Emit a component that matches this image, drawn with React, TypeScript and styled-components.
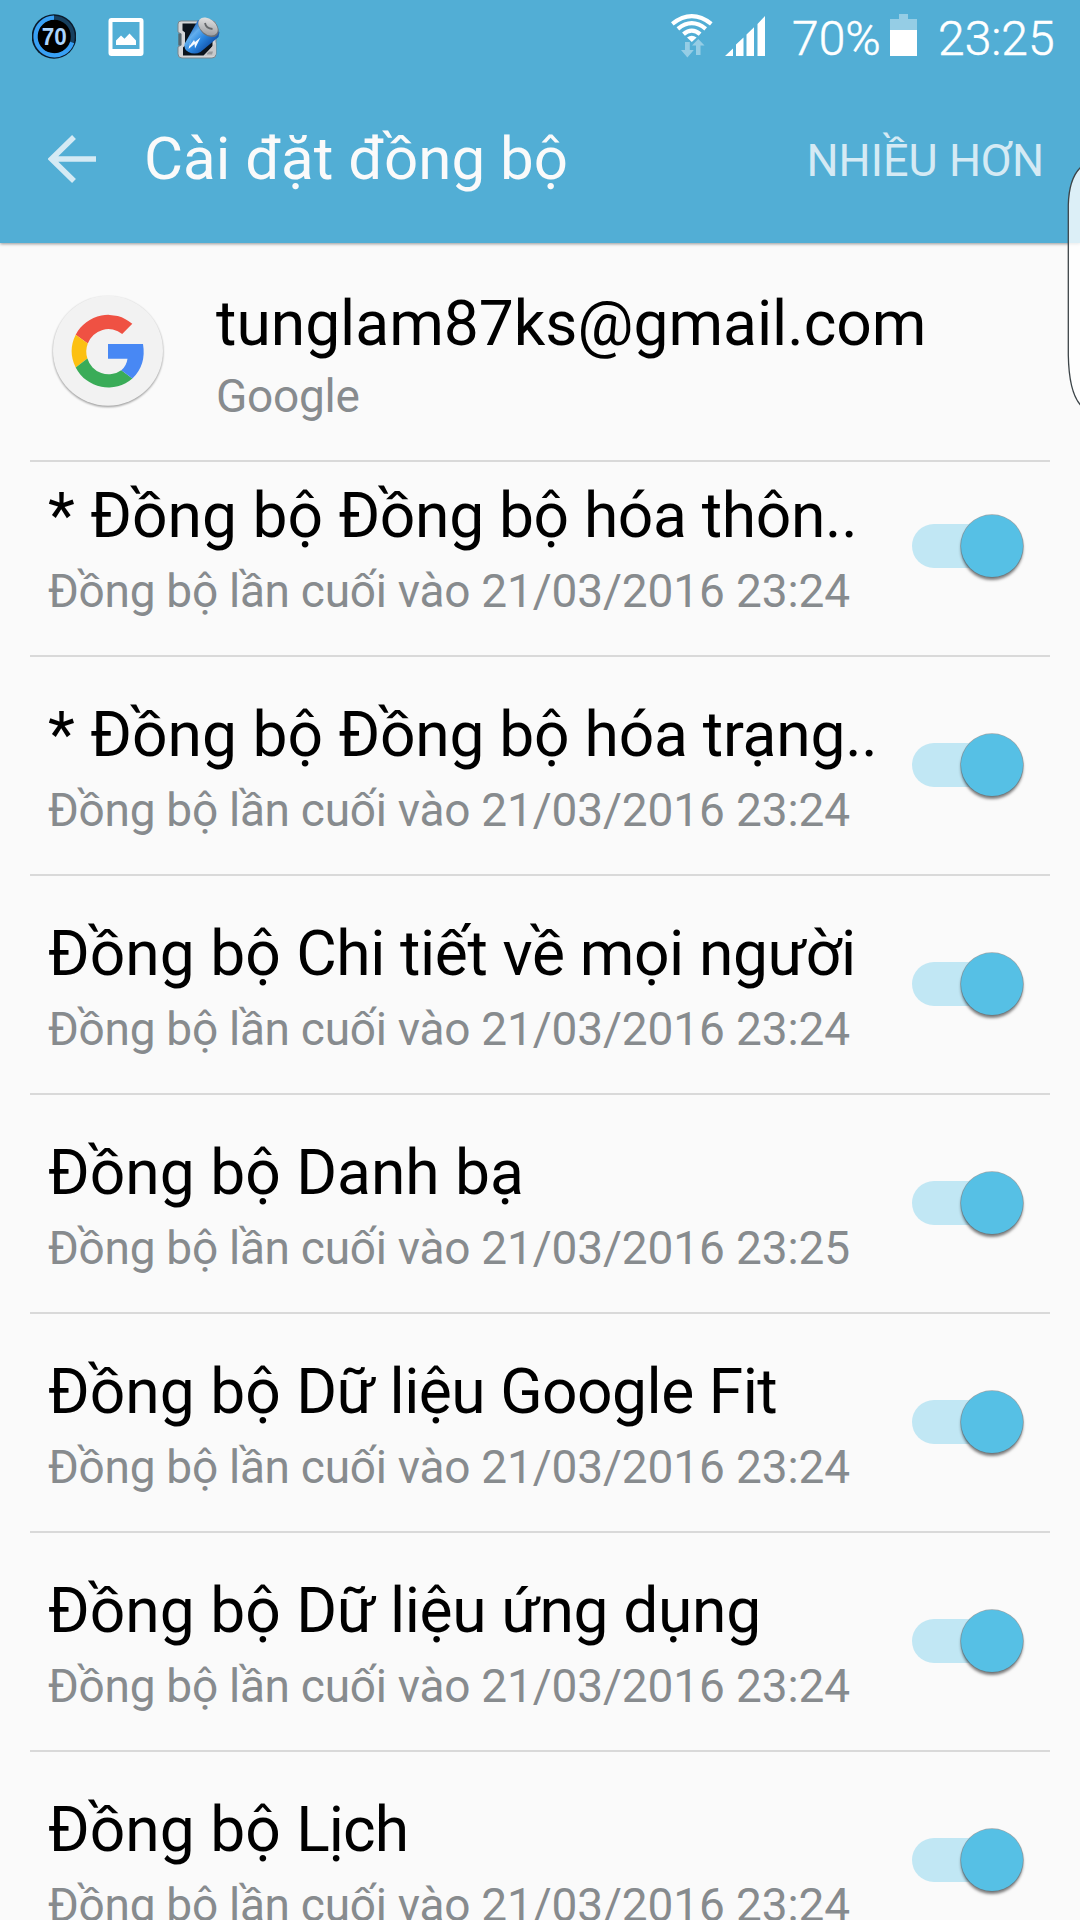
import React from "react";
import styled, { createGlobalStyle } from "styled-components";

const Global = createGlobalStyle`
  html, body { margin: 0; padding: 0; background: #fafafa; }
  * { box-sizing: border-box; }
`;

const Screen = styled.div`
  position: relative;
  width: 1080px;
  height: 1920px;
  overflow: hidden;
  display: flex;
  flex-direction: column;
  background: #fafafa;
  font-family: Roboto, "Noto Sans", sans-serif;
  white-space: nowrap;
`;

const TopArea = styled.header`
  flex: none;
  height: 243px;
  background: #52aed5;
  box-shadow: 0 1px 3px rgba(0, 0, 0, 0.4);
  z-index: 1;
`;

const StatusBar = styled.div`
  height: 75px;
  padding: 0 26px 0 32px;
  display: flex;
  justify-content: space-between;
`;

const StatusGroup = styled.div`
  display: flex;
  align-items: flex-start;
`;

const StatusIcon = styled.svg<{ $gap?: number }>`
  display: block;
  flex: none;
  margin-left: ${(p) => p.$gap ?? 0}px;
`;

const StatusText = styled.span<{ $width: number; $gap: number }>`
  width: ${(p) => p.$width}px;
  margin-left: ${(p) => p.$gap}px;
  padding-top: 11px;
  font-size: 48px;
  line-height: 56px;
  font-weight: 300;
  -webkit-text-stroke: 0.5px #fff;
  color: #fff;
`;

const ActionBar = styled.div`
  height: 168px;
  display: flex;
  align-items: center;
  padding: 0 36px 0 48px;
`;

const Title = styled.h1`
  flex: 1;
  margin: 0 0 0 48px;
  font-size: 60px;
  line-height: 70px;
  font-weight: 400;
  color: #fafafa;
`;

const MoreButton = styled.button`
  margin: 4px 0 0;
  padding: 0;
  border: 0;
  background: none;
  font: 400 45px/54px Roboto, "Noto Sans", sans-serif;
  color: #d5eaf4;
`;

const Account = styled.section`
  flex: none;
  height: 219px;
  margin: 0 30px;
  padding-left: 20px;
  display: flex;
  border-bottom: 2px solid #d9d9d9;
`;

const AccountIcon = styled.svg`
  display: block;
  flex: none;
  margin-top: 47px;
`;

const AccountText = styled.div`
  margin: 44px 0 0 50px;
`;

const Label = styled.div`
  font-size: 62.3px;
  line-height: 74px;
  color: #000;
`;

const Name = styled.span<{ $tracking: number }>`
  letter-spacing: ${(p) => p.$tracking}px;
`;

const Caption = styled.div<{ $gap: number }>`
  margin-top: ${(p) => p.$gap}px;
  font-size: 46px;
  line-height: 54px;
  letter-spacing: -0.28px;
  color: #878b8e;
`;

const Timestamp = styled.time`
  letter-spacing: -0.13px;
`;

const ListViewport = styled.main`
  flex: 1;
  min-height: 0;
  overflow: hidden;
  padding: 0 30px;
`;

const List = styled.div`
  margin-top: -24px;
`;

const Row = styled.div`
  height: 219px;
  padding: 41px 26px 0 18px;
  display: flex;
  justify-content: space-between;
  border-bottom: 2px solid #d9d9d9;
`;

const Toggle = styled.button`
  flex: none;
  width: 112px;
  height: 62px;
  margin-top: 36px;
  padding: 0;
  border: 0;
  background: none;
  display: flex;
  align-items: center;
`;

const Track = styled.span`
  flex: none;
  width: 104px;
  height: 44px;
  border-radius: 22px;
  background: #c1e7f4;
`;

const Thumb = styled.span`
  flex: none;
  width: 62px;
  height: 62px;
  margin-left: -55.5px;
  border-radius: 50%;
  background: #56c0e5;
  box-shadow: 0 0 0 0.7px rgba(90, 110, 118, 0.6), 0 3px 3px rgba(0, 0, 0, 0.5);
`;

const EdgeHandle = styled.svg`
  position: absolute;
  top: 160px;
  right: 0;
  z-index: 2;
`;

const BadgeText = styled.text`
  font: 700 24px "Liberation Sans", sans-serif;
  fill: #a9d4ff;
`;

const items = [
  { prefix: "* Đồng bộ ", name: "Đồng bộ hóa thôn..", time: "23:24", tracking: -0.33 },
  { prefix: "* Đồng bộ ", name: "Đồng bộ hóa trạng..", time: "23:24", tracking: -0.24 },
  { prefix: "Đồng bộ ", name: "Chi tiết về mọi người", time: "23:24", tracking: -0.38 },
  { prefix: "Đồng bộ ", name: "Danh bạ", time: "23:25", tracking: 0 },
  { prefix: "Đồng bộ ", name: "Dữ liệu Google Fit", time: "23:24", tracking: -0.5 },
  { prefix: "Đồng bộ ", name: "Dữ liệu ứng dụng", time: "23:24", tracking: -0.35 },
  { prefix: "Đồng bộ ", name: "Lịch", time: "23:24", tracking: -0.9 },
];

const PercentBadge = () => (
  <StatusIcon width="44" height="75" viewBox="32 0 44 75">
    <circle cx="54" cy="36.5" r="22.3" fill="#0a1a2b" />
    <circle cx="54" cy="36.5" r="18.8" fill="#000" stroke="#17405f" strokeWidth="4" />
    <path d="M72.2 42.5A18.8 18.8 0 1 1 54 17.7" fill="none" stroke="#38a0f5" strokeWidth="4.2" />
    <BadgeText x="54.2" y="45" textAnchor="middle" textLength="25" lengthAdjust="spacingAndGlyphs">70</BadgeText>
  </StatusIcon>
);

const PictureIcon = () => (
  <StatusIcon $gap={32} width="36" height="75" viewBox="108 0 36 75">
    <path fillRule="evenodd" fill="#fff" d="M111.5 18h29q3 0 3 3v32q0 3-3 3h-29q-3 0-3-3v-32q0-3 3-3zM112.5 22v27h27v-27z" />
    <path fill="#fff" d="M116 45v-4.5l5-5 3.5 3.3 5-5.2 6.5 7v4.400z" />
  </StatusIcon>
);

const BatteryAppIcon = () => (
  <StatusIcon $gap={33} width="44" height="75" viewBox="177 0 44 75">
    <defs>
      <linearGradient id="cell" x1="188" y1="31" x2="206" y2="49" gradientUnits="userSpaceOnUse">
        <stop offset="0" stopColor="#2a70c4" />
        <stop offset=".25" stopColor="#62aeed" />
        <stop offset=".6" stopColor="#2a86e0" />
        <stop offset="1" stopColor="#1458b0" />
      </linearGradient>
      <linearGradient id="cap" x1="0" y1="0" x2="1" y2="1">
        <stop offset="0" stopColor="#eee" />
        <stop offset="1" stopColor="#909296" />
      </linearGradient>
    </defs>
    <path d="M181 21h31q4 0 4 4v29q0 4-4 4h-30q-4 0-4-4v-7l3-2v-11l-3-2v-8q0-3 3-3z" fill="#d3d5d7" stroke="#7b858b" strokeWidth="1" />
    <path d="M182.500 23.500h30v23l-9 9h-20.500v-8l2-2v-13l-2.500-2z" fill="#0b141d" />
    <path d="M178.300 33.500h3v12h-3z" fill="#56666f" />
    <path d="M198 20L184.500 44q-1 5 4 8 6 3 12 0l18-15 1-5z" fill="url(#cell)" />
    <path d="M216 42l-12 14h9q3 0 3-3z" fill="#c7c9cb" />
    <ellipse cx="208.500" cy="27.500" rx="11.500" ry="8" transform="rotate(40 208.500 27.500)" fill="#6c7278" />
    <ellipse cx="208" cy="26.500" rx="11" ry="7.400" transform="rotate(40 208 26.500)" fill="url(#cap)" />
    <path d="M205 23q1 5.500 7.500 6" fill="none" stroke="#65686b" strokeWidth="1.800" />
    <path d="M191 38.500l-2.500 10.500 6-5 .5 4.500 5.500-11-5.500 4.500-1-2-4.500 6z" fill="#f4faff" />
    <path d="M207 53.500l2-2h4l-1 3h-5z" fill="#96999c" />
  </StatusIcon>
);

const WifiIcon = () => (
  <StatusIcon width="42" height="75" viewBox="671 0 42 75">
    <g fill="none" stroke="#fff" strokeWidth="4.200">
      <path d="M672.300 23.800Q691.800 8.400 711.300 23.800" />
      <path d="M677.900 28.800Q691.800 17.500 705.700 28.800" />
      <path d="M683.500 34.200Q691.800 27 700.100 34.200" />
    </g>
    <path d="M687 37.500q4.800-3.500 9.600 0l-4.800 4.500z" fill="#fff" />
    <path d="M685 42h4.800v8h4l-6.400 7.500-6.400-7.500h4zM696 55v-9.500h-4l6.300-6.500 6.200 6.500h-4v9.500z" fill="#95cde5" />
  </StatusIcon>
);

const SignalIcon = () => (
  <StatusIcon $gap={12} width="41" height="75" viewBox="725 0 41 75">
    <path fill="#fff" d="M725 56l8-7.500v7.500zM736 56v-11.500l7.500-7v18.500zM746.500 56v-21.500l7.500-7.200v28.700zM757.500 56v-32l7.500-8v40z" />
  </StatusIcon>
);

const BatteryIcon = () => (
  <StatusIcon $gap={10} width="27" height="75" viewBox="890 0 27 75">
    <path fill="#95cde5" d="M899 14h9v5h9v11h-27v-11h9z" />
    <path fill="#fff" d="M890 30h27v26h-27z" />
  </StatusIcon>
);

const BackArrow = () => (
  <svg width="48" height="50" viewBox="48 134 48 50">
    <path d="M74 137L51.500 159 74 181M51 159H96" fill="none" stroke="#d5eaf4" strokeWidth="5.500" />
  </svg>
);

const GoogleIcon = () => (
  <AccountIcon width="116" height="122" viewBox="50 290 116 122">
    <defs>
      <filter id="soft" x="-20%" y="-20%" width="140%" height="140%">
        <feGaussianBlur stdDeviation="1.300" />
      </filter>
    </defs>
    <circle cx="108" cy="351.900" r="55" fill="#000" opacity=".4" filter="url(#soft)" />
    <circle cx="108" cy="350.700" r="55" fill="#f2f2f2" />
    <path d="M75.700 334.700A36.700 36.700 0 0 1 132.300 323.800L122.200 333.900A22 22 0 0 0 87.800 343.500z" fill="#ef5143" />
    <path d="M75.700 334.700A36.700 36.700 0 0 0 75.700 367.500L87.400 358.400A22 22 0 0 1 87.800 343.500z" fill="#fcc011" />
    <path d="M75.700 367.500A36.700 36.700 0 0 0 132.400 378.500L121.300 370.200A22 22 0 0 1 87.400 358.400z" fill="#3aac58" />
    <path d="M108 344h35Q146.500 365 132.400 378.500L121.300 370.200Q126.500 366 127.500 358.700H108z" fill="#4888f4" />
  </AccountIcon>
);

export default function App() {
  return (
    <>
      <Global />
      <Screen>
        <TopArea>
          <StatusBar>
            <StatusGroup>
              <PercentBadge />
              <PictureIcon />
              <BatteryAppIcon />
            </StatusGroup>
            <StatusGroup>
              <WifiIcon />
              <SignalIcon />
              <StatusText $gap={26} $width={88}>70%</StatusText>
              <BatteryIcon />
              <StatusText $gap={21} $width={116}>23:25</StatusText>
            </StatusGroup>
          </StatusBar>
          <ActionBar>
            <BackArrow />
            <Title>Cài đặt đồng bộ</Title>
            <MoreButton>NHIỀU HƠN</MoreButton>
          </ActionBar>
        </TopArea>
        <Account>
          <GoogleIcon />
          <AccountText>
            <Label>tunglam87ks@gmail.com</Label>
            <Caption $gap={8}>Google</Caption>
          </AccountText>
        </Account>
        <ListViewport>
          <List>
            {items.map((item) => (
              <Row key={item.name}>
                <div>
                  <Label>
                    {item.prefix}
                    <Name $tracking={item.tracking}>{item.name}</Name>
                  </Label>
                  <Caption $gap={11}>
                    Đồng bộ lần cuối vào <Timestamp>21/03/2016 {item.time}</Timestamp>
                  </Caption>
                </div>
                <Toggle role="switch" aria-checked="true">
                  <Track />
                  <Thumb />
                </Toggle>
              </Row>
            ))}
          </List>
        </ListViewport>
        <EdgeHandle width="14" height="252" viewBox="1066 160 14 252">
          <path
            d="M1081 167Q1069 178 1068.300 205V355Q1069 393 1081 405.500z"
            fill="#fff"
            fillOpacity=".8"
            stroke="#3c4448"
            strokeWidth="1.300"
          />
        </EdgeHandle>
      </Screen>
    </>
  );
}
